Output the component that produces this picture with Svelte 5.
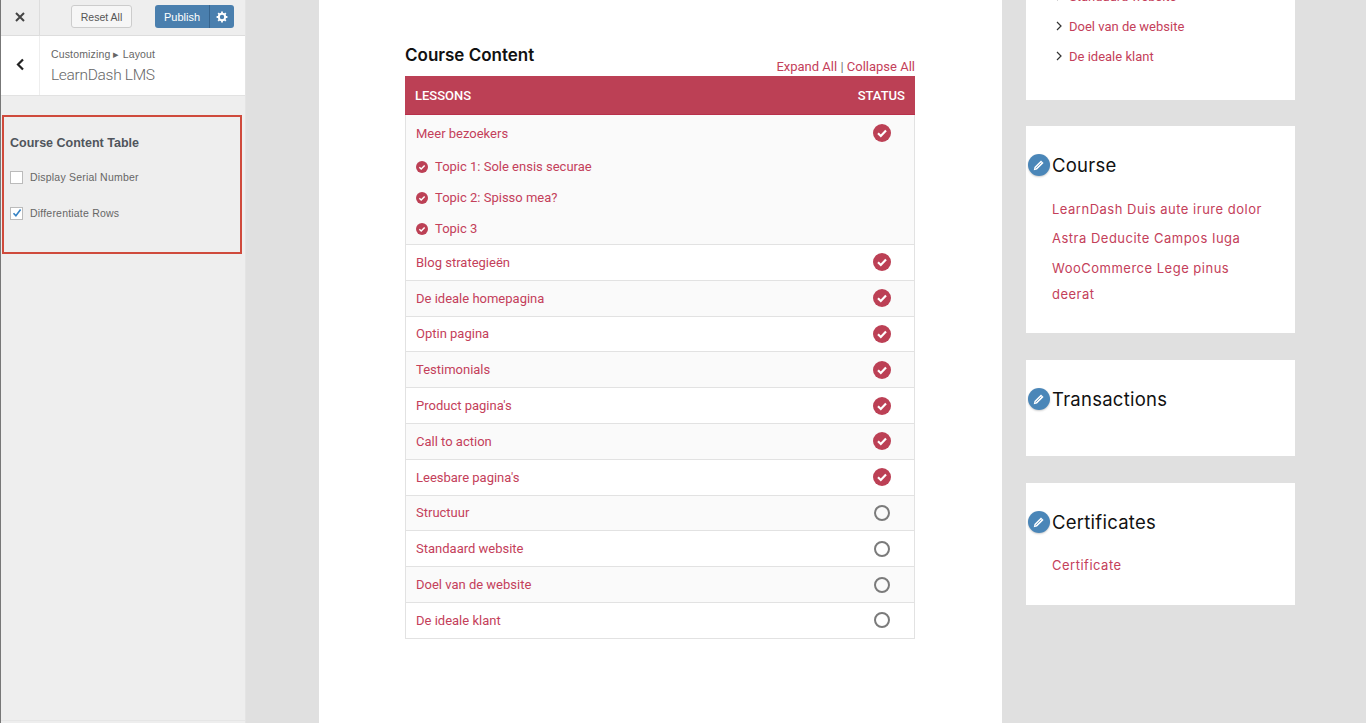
<script>
    const done = ["Blog strategieën", "De ideale homepagina", "Optin pagina", "Testimonials", "Product pagina's", "Call to action", "Leesbare pagina's"];
    const todo = ["Structuur", "Standaard website", "Doel van de website", "De ideale klant"];
    const lessons = [
        ...done.map((name) => ({ name, complete: true })),
        ...todo.map((name) => ({ name, complete: false })),
    ];
    const topics = ["Topic 1: Sole ensis securae", "Topic 2: Spisso mea?", "Topic 3"];
    const courses = ["LearnDash Duis aute irure dolor", "Astra Deducite Campos Iuga", "WooCommerce Lege pinus deerat"];
</script>

{#snippet check(size)}
    <svg class="check" width={size} height={size} viewBox="0 0 18 18">
        <circle cx="9" cy="9" r="9" fill="#bc4055" />
        <path d="M5 9.3l2.8 2.7 5.2-5.4" fill="none" stroke="#fff" stroke-width="2.2" />
    </svg>
{/snippet}

{#snippet pencil()}
    <span class="pencil">
        <svg width="14" height="14" viewBox="0 0 12 12">
            <path d="M1.5 10.5l.6-2.8 5.6-5.6 2.2 2.2-5.6 5.6z" fill="#fff" />
            <path d="M3 8.9l4.9-4.9" stroke="#4a86b8" stroke-width=".7" />
        </svg>
    </span>
{/snippet}

<div class="page">
    <section class="customizer">
        <div class="topbar">
            <button class="close" aria-label="Close">
                <svg width="10" height="10" viewBox="0 0 10 10">
                    <path d="M1 1l8 8M9 1l-8 8" stroke="#444" stroke-width="2" />
                </svg>
            </button>
            <button class="reset">Reset All</button>
            <div class="publish">
                <span class="publish-label">Publish</span>
                <span class="publish-gear">
                    <svg width="12" height="12" viewBox="0 0 12 12">
                        <circle cx="6" cy="6" r="3.2" fill="none" stroke="#fff" stroke-width="2" />
                        <path d="M6 .6v2M6 9.4v2M.6 6h2M9.4 6h2M2.2 2.2l1.4 1.4M8.4 8.4l1.4 1.4M9.8 2.2L8.4 3.6M3.6 8.4L2.2 9.8" stroke="#fff" stroke-width="1.8" />
                    </svg>
                </span>
            </div>
        </div>
        <div class="section-head">
            <button class="back" aria-label="Back">
                <svg width="9" height="13" viewBox="0 0 9 13">
                    <path d="M7 1.5l-5 5 5 5" fill="none" stroke="#222" stroke-width="2.2" />
                </svg>
            </button>
            <div class="section-title">
                <span class="crumb">Customizing ▸ Layout</span>
                <span class="title">LearnDash LMS</span>
            </div>
        </div>
        <div class="options">
            <h3>Course Content Table</h3>
            <label class="option">
                <span class="box"></span>
                Display Serial Number
            </label>
            <label class="option">
                <span class="box">
                    <svg width="10" height="10" viewBox="0 0 10 10">
                        <path d="M1.5 5.2l2.4 2.6L8.6 1.6" fill="none" stroke="#3582c4" stroke-width="1.6" />
                    </svg>
                </span>
                Differentiate Rows
            </label>
        </div>
        <div class="footer-line"></div>
    </section>

    <div class="preview">
        <main class="article">
            <div class="content-head">
                <h2>Course Content</h2>
                <div class="expand"><span>Expand All</span> <i>|</i> <span>Collapse All</span></div>
            </div>
            <div class="table">
                <div class="table-head">
                    <span>LESSONS</span>
                    <span>STATUS</span>
                </div>
                <div class="lesson-open">
                    <div class="open-row">
                        <a href="#top">Meer bezoekers</a>
                        {@render check(18)}
                    </div>
                    {#each topics as topic}
                        <div class="topic">
                            {@render check(12)}
                            <a href="#top">{topic}</a>
                        </div>
                    {/each}
                </div>
                {#each lessons as lesson, i}
                    <div class="row" class:shade={i % 2 === 1}>
                        <a href="#top">{lesson.name}</a>
                        {#if lesson.complete}
                            {@render check(18)}
                        {:else}
                            <span class="empty"></span>
                        {/if}
                    </div>
                {/each}
            </div>
        </main>

        <aside class="sidebar">
            <div class="card first">
                <ul>
                    {#each ["Standaard website", "Doel van de website", "De ideale klant"] as item}
                        <li>
                            <svg width="8" height="10" viewBox="0 0 8 10">
                                <path d="M2 1l4 4-4 4" fill="none" stroke="#333" stroke-width="1.2" />
                            </svg>
                            <a href="#top">{item}</a>
                        </li>
                    {/each}
                </ul>
            </div>
            <div class="card course">
                {@render pencil()}
                <h4>Course</h4>
                {#each courses as course}
                    <a class="mont" href="#top">{course}</a>
                {/each}
            </div>
            <div class="card transactions">
                {@render pencil()}
                <h4>Transactions</h4>
            </div>
            <div class="card certificates">
                {@render pencil()}
                <h4>Certificates</h4>
                <a class="mont" href="#top">Certificate</a>
            </div>
        </aside>
    </div>
</div>

<style>
    :global(body) {
        margin: 0;
        overflow: hidden;
    }

    a {
        color: #c4405a;
        text-decoration: none;
    }

    .page {
        display: grid;
        grid-template-columns: 246px 1fr;
        height: 723px;
        overflow: hidden;
        font-family: Roboto, sans-serif;
        background: #e0e0e0;
    }

    /* ========================= Customizer ========================= */

    .customizer {
        display: flex;
        flex-direction: column;
        background: #eeeeee;
        border-left: 1px solid #777;
        border-right: 1px solid #e4e4e4;
        box-sizing: border-box;
        font-family: "Liberation Sans", Arial, sans-serif;
    }

    .topbar {
        display: flex;
        align-items: center;
        height: 33px;
        padding-bottom: 2px;
        border-bottom: 1px solid #ddd;
    }

    .topbar button {
        font: inherit;
        padding: 0;
    }

    .close {
        width: 39px;
        height: 35px;
        margin-bottom: -2px;
        padding-bottom: 2px !important;
        border: 0;
        border-right: 1px solid #ddd;
        background: none;
    }

    .reset {
        width: 61px;
        height: 23px;
        margin-left: 31px;
        font-size: 10.5px !important;
        color: #555;
        background: #f6f6f6;
        border: 1px solid #ccc;
        border-radius: 3px;
    }

    .publish {
        display: flex;
        height: 23px;
        margin-left: 23px;
        color: #fff;
        background: #4a7fae;
        border-radius: 3px;
        font-size: 11px;
    }

    .publish-label {
        display: flex;
        align-items: center;
        padding: 0 9px;
        border-right: 1px solid #36648e;
    }

    .publish-gear {
        display: flex;
        align-items: center;
        padding: 0 6px;
    }

    .section-head {
        display: flex;
        height: 59px;
        background: #fff;
        border-bottom: 1px solid #e2e2e2;
    }

    .back {
        width: 39px;
        padding: 0;
        border: 0;
        border-right: 1px solid #eee;
        background: none;
    }

    .section-title {
        display: flex;
        flex-direction: column;
        gap: 6px;
        padding: 12px 0 0 11px;
        color: #666;
    }

    .crumb {
        font-size: 10.5px;
        letter-spacing: 0.15px;
    }

    .title {
        font-family: Roboto, sans-serif;
        font-size: 15.5px;
        font-weight: 300;
        letter-spacing: -0.3px;
        color: #666;
    }

    .options {
        display: flex;
        flex-direction: column;
        height: 139px;
        box-sizing: border-box;
        margin: 19px 3px 0 1px;
        padding: 19px 0 0 6px;
        border: 2px solid #cf4a3c;
    }

    .options h3 {
        margin: 0 0 19px;
        font-size: 12.5px;
        line-height: 15px;
        color: #50555c;
    }

    .option {
        display: flex;
        align-items: center;
        gap: 7px;
        height: 14px;
        margin-bottom: 22px;
        font-size: 10.5px;
        letter-spacing: 0.2px;
        color: #666;
    }

    .box {
        display: flex;
        align-items: center;
        justify-content: center;
        width: 11px;
        height: 11px;
        background: #fff;
        border: 1px solid #bbb;
    }

    .footer-line {
        margin-top: auto;
        margin-bottom: 2px;
        height: 1px;
        background: #e6e6e6;
    }

    /* ========================= Preview ========================= */

    .preview {
        display: flex;
        align-items: flex-start;
        padding-left: 73px;
    }

    .article {
        width: 683px;
        height: 723px;
        box-sizing: border-box;
        padding: 44px 87px 0 86px;
        background: #fff;
    }

    .content-head {
        display: flex;
        justify-content: space-between;
        align-items: flex-end;
        height: 32px;
    }

    .content-head h2 {
        margin: 0;
        align-self: flex-start;
        font-family: Inter, sans-serif;
        font-size: 17px;
        line-height: 22px;
        font-weight: 600;
        color: #111;
    }

    .expand {
        font-size: 13px;
        line-height: 15px;
        margin-bottom: 2px;
        color: #c4405a;
    }

    .expand i {
        font-style: normal;
        color: #777;
    }

    .table {
        border: 1px solid #e2e2e2;
        border-top: 0;
        font-size: 13px;
    }

    .table-head {
        display: flex;
        justify-content: space-between;
        align-items: center;
        height: 39px;
        box-sizing: border-box;
        margin: 0 -1px;
        padding: 0 10px;
        color: #fff;
        font-weight: 500;
        background: #bc4055;
        border-bottom: 1px solid #b8304a;
    }

    .lesson-open {
        height: 130px;
        box-sizing: border-box;
        background: #fafafa;
        border-bottom: 1px solid #e2e2e2;
    }

    .open-row,
    .row {
        display: flex;
        justify-content: space-between;
        align-items: center;
        padding: 0 23px 0 10px;
    }

    .open-row {
        height: 36px;
    }

    .topic {
        display: flex;
        align-items: center;
        gap: 7px;
        height: 31px;
        padding-left: 10px;
        font-size: 13px;
    }

    .row {
        height: 35.8px;
        box-sizing: border-box;
        background: #fff;
        border-bottom: 1px solid #e2e2e2;
    }

    .row:last-child {
        border-bottom: 0;
        height: 35px;
    }

    .row.shade {
        background: #fafafa;
    }

    .check {
        flex: none;
    }

    .empty {
        width: 12px;
        height: 12px;
        border: 2.5px solid #7b7b7b;
        border-radius: 50%;
        margin-right: 1px;
        margin-left: 1px;
    }

    /* ========================= Sidebar ========================= */

    .sidebar {
        display: flex;
        flex-direction: column;
        gap: 26.4px;
        width: 269px;
        margin-left: 24px;
        margin-top: -19px;
    }

    .card {
        position: relative;
        box-sizing: border-box;
        background: #fff;
        padding-left: 26px;
    }

    .card.first {
        height: 119px;
        padding-left: 29px;
    }

    .card ul {
        margin: 0;
        padding: 0;
        list-style: none;
        font-size: 13px;
    }

    .card li {
        display: flex;
        align-items: center;
        gap: 6px;
        height: 30px;
    }

    .card h4 {
        margin: 0;
        padding-top: 27px;
        font-family: Inter, sans-serif;
        font-size: 18.5px;
        line-height: 24px;
        font-weight: 400;
        letter-spacing: 0.25px;
        color: #111;
    }

    .course {
        height: 207px;
    }

    .transactions {
        height: 96.5px;
    }

    .certificates {
        height: 122px;
    }

    .mont {
        display: block;
        font-family: Inter, sans-serif;
        font-size: 13px;
        line-height: 26px;
        letter-spacing: 0.5px;
        margin-bottom: 3.5px;
        padding-right: 26px;
    }

    .card h4 + .mont {
        margin-top: 18.6px;
    }

    .pencil {
        position: absolute;
        left: 2px;
        top: 28px;
        display: flex;
        align-items: center;
        justify-content: center;
        width: 22px;
        height: 22px;
        border-radius: 50%;
        background: #4a86b8;
        box-shadow: 0 1px 2px rgba(0, 0, 0, 0.2);
    }
</style>
